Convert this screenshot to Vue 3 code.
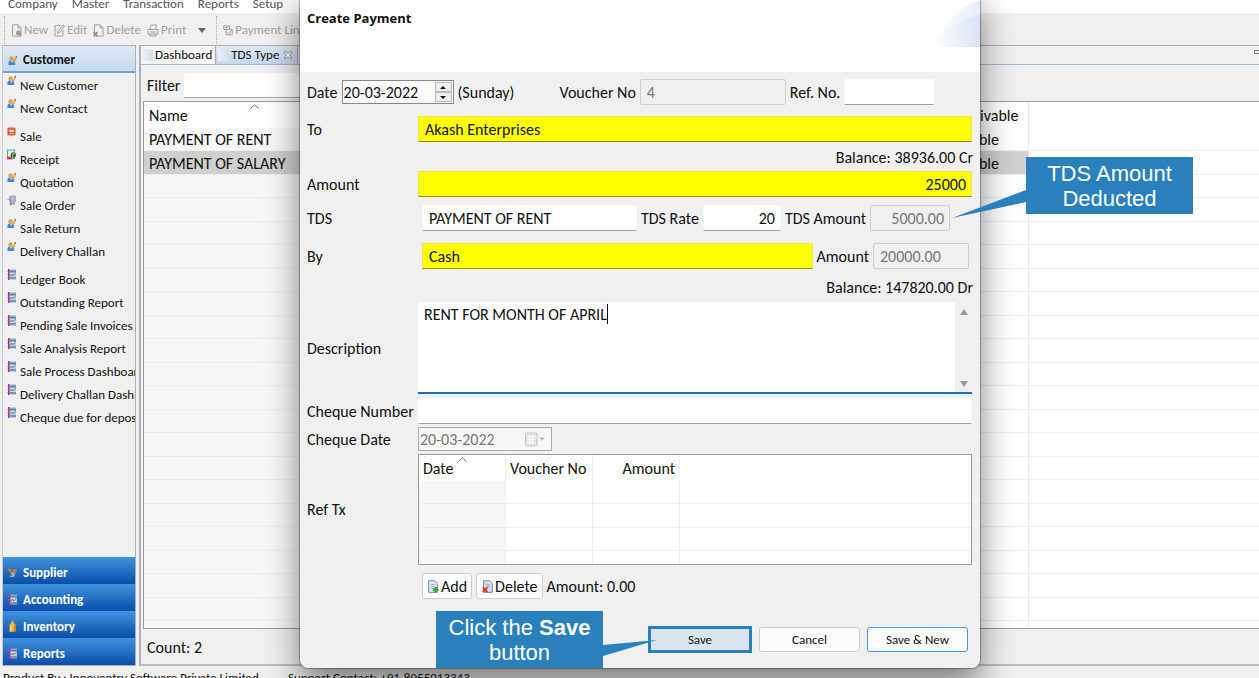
<script setup>
import { ref } from 'vue'

const menus = ['Company', 'Master', 'Transaction', 'Reports', 'Setup']
const groups = [
  [
    { label: 'New Customer', icon: 'person' },
    { label: 'New Contact', icon: 'person' },
  ],
  [
    { label: 'Sale', icon: 'sale' },
    { label: 'Receipt', icon: 'receipt' },
    { label: 'Quotation', icon: 'person' },
    { label: 'Sale Order', icon: 'order' },
    { label: 'Sale Return', icon: 'person' },
    { label: 'Delivery Challan', icon: 'person' },
  ],
  [
    { label: 'Ledger Book', icon: 'book' },
    { label: 'Outstanding Report', icon: 'book' },
    { label: 'Pending Sale Invoices', icon: 'book' },
    { label: 'Sale Analysis Report', icon: 'book' },
    { label: 'Sale Process Dashboard', icon: 'book' },
    { label: 'Delivery Challan Dashboard', icon: 'book' },
    { label: 'Cheque due for deposit', icon: 'book' },
  ],
]
const drawers = [
  { label: 'Supplier', icon: 'supplier' },
  { label: 'Accounting', icon: 'book' },
  { label: 'Inventory', icon: 'bottle' },
  { label: 'Reports', icon: 'book' },
]
const rows = [
  ['PAYMENT OF RENT', 'Payable'],
  ['PAYMENT OF SALARY', 'Payable'],
  ...Array.from({ length: 20 }, () => ['', '']),
]

const filter = ref('')
const date = ref('20-03-2022')
const voucherNo = ref('4')
const refNo = ref('')
const to = ref('Akash Enterprises')
const amount = ref('25000')
const tds = ref('PAYMENT OF RENT')
const tdsRate = ref('20')
const tdsAmount = ref('5000.00')
const by = ref('Cash')
const byAmount = ref('20000.00')
const description = ref('RENT FOR MONTH OF APRIL')
const chequeNo = ref('')
const chequeDate = ref('20-03-2022')
</script>

<template>
  <div class="app">
    <svg class="sprite" aria-hidden="true">
      <symbol id="person" viewBox="0 0 10 10">
        <path d="M0.5 10V7.4Q0.6 5 3 4.8H6Q8 5 8 7V10Z" fill="#3f86dc" />
        <path d="M3 5L4.5 7.5L6 5Z" fill="#e8f0fa" />
        <circle cx="4" cy="2.8" r="2.6" fill="#e8a13c" />
        <path d="M9.3 0.8L6.3 7.4" stroke="#d09a48" stroke-width="1.5" />
        <path d="M9.6 0L9 1.6" stroke="#c04848" stroke-width="1.5" />
      </symbol>
      <symbol id="sale" viewBox="0 0 10 10">
        <rect x="0.5" y="0.5" width="9" height="9" rx="1.4" fill="#ec5a2c" />
        <path d="M2.4 3H7.6L7.2 5.6H3Z" fill="#fff" />
        <circle cx="3.7" cy="7.3" r="0.7" fill="#fff" /><circle cx="6.5" cy="7.3" r="0.7" fill="#fff" />
      </symbol>
      <symbol id="receipt" viewBox="0 0 10 11">
        <rect x="0.5" y="0.5" width="8" height="9.5" fill="#dff1fa" stroke="#5593b5" />
        <path d="M0 8H5.5V11H0Z" fill="#d23b2e" />
        <circle cx="7" cy="6" r="3" fill="#3d6b26" />
        <path d="M8.4 4.4Q5.8 4 6.4 5.7T6 7.6" fill="none" stroke="#f0d83c" />
      </symbol>
      <symbol id="order" viewBox="0 0 10 11">
        <path d="M3 1L9 0.4L9.6 6.4L3.8 7.8Z" fill="#b4bad8" stroke="#7c82a2" stroke-width="0.8" />
        <path d="M0.5 4.5L3 3.5L4 9L8.5 8.2" fill="none" stroke="#888" stroke-width="1" />
        <circle cx="4.2" cy="9.8" r="1" fill="#555" /><circle cx="7.8" cy="9" r="1" fill="#777" />
      </symbol>
      <symbol id="book" viewBox="0 0 9 11">
        <rect x="1" y="0.5" width="8" height="10" fill="#8ea9c9" />
        <path d="M2.5 2.5H9M2.5 9H9" stroke="#6482ab" stroke-width="1" />
        <rect x="2.6" y="4" width="6" height="3.8" fill="#d3e2dc" />
        <path d="M3 7L4.5 5.2L5.8 6.7L8.4 4.4" fill="none" stroke="#26473a" stroke-width="0.8" />
        <rect x="1" y="0" width="1.4" height="11" fill="#c0209a" />
        <path d="M0 2.5H1.4M0 5.5H1.4M0 8.5H1.4" stroke="#888" stroke-width="0.5" />
      </symbol>
      <symbol id="supplier" viewBox="0 0 10 10">
        <path d="M3 4L8.4 6L6.5 10H2Z" fill="#a8b0b6" />
        <circle cx="2" cy="2.4" r="2" fill="#c07a3c" />
        <path d="M4.6 2L9.6 0.6V4.5L6 5.4Z" fill="#b98045" />
        <path d="M1 4.5L4 8.5" stroke="#6d5a48" stroke-width="1.6" />
      </symbol>
      <symbol id="bottle" viewBox="0 0 9 11">
        <path d="M3.5 0H5.5V1.6L7.5 3.5V10.5L1.5 11V3.5L3.5 1.6Z" fill="#f5b52c" />
        <path d="M3 4V10" stroke="#ffe08a" stroke-width="1.2" />
        <path d="M6.8 4V10.5" stroke="#d98514" stroke-width="1.2" />
      </symbol>
      <symbol id="page" viewBox="0 0 12 13">
        <path d="M1.5 0.8H7L10 3.8V12.2H1.5Z" fill="none" stroke="currentColor" />
        <path d="M7 0.8V3.8H10" fill="none" stroke="currentColor" />
      </symbol>
    </svg>

    <nav class="menubar">
      <a v-for="m in menus" :key="m" href="#">{{ m }}</a>
    </nav>

    <div class="toolbar">
      <button type="button">
        <svg width="11" height="13" viewBox="0 0 11 13"><use href="#page" width="12" height="13" /><circle cx="7.6" cy="9" r="2.6" fill="#9a9a9a" /></svg>New
      </button>
      <button type="button">
        <svg width="11" height="13" viewBox="0 0 11 13"><path d="M6 1.5H1V12H9V6.5M3.5 9.5L4 7.5L9 1L10.5 2.2L5.5 8.8Z" fill="none" stroke="currentColor" /></svg>Edit
      </button>
      <button type="button">
        <svg width="11" height="13" viewBox="0 0 11 13"><use href="#page" width="12" height="13" /><path d="M0.5 8L4.5 12M4.5 8L0.5 12" stroke="#8a8a8a" stroke-width="1.6" /></svg>Delete
      </button>
      <button type="button">
        <svg width="12" height="13" viewBox="0 0 12 13"><path d="M3 5L4 1H9.5L8.5 5M1 5.5H11V10H1ZM3 10V12H9V10M3 8H9" fill="none" stroke="currentColor" /></svg>Print
      </button>
      <button type="button" class="arrow" aria-label="More print options"><i></i></button>
      <button type="button" class="last">
        <svg width="10" height="11" viewBox="0 0 10 11"><path d="M0.8 0.8H6.5V4.5H0.8ZM3 5V9.8H9.2V4.2H6.5M4.5 7.5L6 8.8L9 4.5M2 2.6H5" fill="none" stroke="currentColor" /></svg>Payment Link
      </button>
    </div>

    <div class="body">
      <aside class="sidebar">
        <button type="button" class="side-head"><svg class="ico"><use href="#person" /></svg>Customer</button>
        <div class="side-list">
          <ul v-for="(g, i) in groups" :key="i">
            <li v-for="it in g" :key="it.label">
              <a href="#"><svg class="ico"><use :href="'#' + it.icon" /></svg>{{ it.label }}</a>
            </li>
          </ul>
        </div>
        <button v-for="d in drawers" :key="d.label" type="button" class="drawer">
          <svg class="ico"><use :href="'#' + d.icon" /></svg>{{ d.label }}
        </button>
      </aside>

      <main class="editor">
        <div class="tabs">
          <button type="button" class="tab"><span class="tab-ico"></span>Dashboard</button>
          <button type="button" class="tab active">
            <span class="tab-ico"></span>TDS Type
            <svg width="8" height="8" viewBox="0 0 8 8"><path d="M0.7 0.7H2.4L4 2.4L5.6 0.7H7.3V2.2L5.6 4L7.3 5.8V7.3H5.6L4 5.6L2.4 7.3H0.7V5.8L2.4 4L0.7 2.2Z" fill="#fff" stroke="#777" stroke-width="0.8" /></svg>
          </button>
          <span class="minimise"></span>
        </div>
        <div class="filter">
          <label for="filter">Filter</label>
          <input id="filter" v-model="filter" type="text" />
        </div>
        <div class="list">
          <table>
            <colgroup><col class="c-name" /><col class="c-mid" /><col class="c-type" /><col /></colgroup>
            <thead>
              <tr>
                <th>Name<svg class="sort" width="9" height="5" viewBox="0 0 9 5"><path d="M0.5 4.5L4.5 0.8L8.5 4.5" fill="none" stroke="#666" /></svg></th>
                <th></th><th>Receivable</th><th></th>
              </tr>
            </thead>
            <tbody>
              <tr v-for="(r, i) in rows" :key="i" :class="{ selected: i === 1 }">
                <td>{{ r[0] }}</td><td></td><td>{{ r[1] }}</td><td></td>
              </tr>
            </tbody>
          </table>
        </div>
        <p class="count">Count: 2</p>
      </main>
    </div>

    <footer class="status">
      <span>Product By : Innoventry Software Private Limited</span>
      <span>Support Contact: +91-8055013343</span>
    </footer>

    <section class="dialog" role="dialog" aria-labelledby="dlg-title">
      <header>
        <h1 id="dlg-title">Create Payment</h1>
        <svg class="swoosh" width="50" height="48" viewBox="0 0 50 48">
          <defs>
            <linearGradient id="sw1" x1="0" x2="1"><stop offset="0" stop-color="#fff" /><stop offset="1" stop-color="#e6edfa" /></linearGradient>
            <linearGradient id="sw2" x1="0" x2="1"><stop offset="0" stop-color="#fff" /><stop offset="1" stop-color="#d9e2f7" /></linearGradient>
          </defs>
          <path d="M2 47Q20 10 50 0V47Z" fill="url(#sw1)" />
          <path d="M2 47Q22 20 50 15V47Z" fill="url(#sw2)" />
        </svg>
      </header>

      <form @submit.prevent>
        <div class="row first">
          <label for="date">Date</label>
          <span class="spin">
            <input id="date" v-model="date" type="text" />
            <span class="spin-btns">
              <button type="button" aria-label="Increase"><i class="up"></i></button>
              <button type="button" aria-label="Decrease"><i class="down"></i></button>
            </span>
          </span>
          <span class="day">(Sunday)</span>
          <label for="vno">Voucher No</label>
          <input id="vno" v-model="voucherNo" class="field vno" type="text" disabled />
          <label for="rno">Ref. No.</label>
          <input id="rno" v-model="refNo" class="field rno" type="text" />
        </div>

        <div class="row gap-l">
          <label class="lead" for="to">To</label>
          <input id="to" v-model="to" class="field must grow" type="text" />
        </div>
        <p class="balance">Balance: 38936.00 Cr</p>
        <div class="row">
          <label class="lead" for="amount">Amount</label>
          <input id="amount" v-model="amount" class="field must grow num" type="text" />
        </div>

        <div class="row gap-m split">
          <label class="lead" for="tds">TDS</label>
          <input id="tds" v-model="tds" class="field grow" type="text" />
          <label for="rate">TDS Rate</label>
          <input id="rate" v-model="tdsRate" class="field rate num" type="text" />
          <label for="tdsamt">TDS Amount</label>
          <input id="tdsamt" v-model="tdsAmount" class="field tdsamt num" type="text" disabled />
        </div>

        <div class="row gap-xl split">
          <label class="lead" for="by">By</label>
          <input id="by" v-model="by" class="field must grow" type="text" />
          <label for="byamt">Amount</label>
          <input id="byamt" v-model="byAmount" class="field byamt" type="text" disabled />
        </div>
        <p class="balance tall">Balance: 147820.00 Dr</p>

        <div class="row">
          <label class="lead" for="desc">Description</label>
          <div class="area-box">
            <textarea id="desc" v-model="description"></textarea>
            <span class="caret"></span>
            <span class="scroll"><i class="up"></i><i class="down"></i></span>
          </div>
        </div>

        <div class="row gap-s">
          <label class="lead" for="cno">Cheque Number</label>
          <input id="cno" v-model="chequeNo" class="field grow" type="text" />
        </div>
        <div class="row gap-xs">
          <label class="lead" for="cdate">Cheque Date</label>
          <span class="datebox">
            <input id="cdate" v-model="chequeDate" type="text" disabled />
            <svg width="20" height="15" viewBox="0 0 20 15">
              <rect x="0.5" y="1" width="11.5" height="13" rx="1.5" fill="#e4e4e8" stroke="#c2c2c8" />
              <path d="M2.5 4.5H10M2.5 7.5H10M2.5 10.5H10M4.5 3V12M7.5 3V12" stroke="#fff" />
              <path d="M14 5.5H20L17 8.8Z" fill="#bbb" />
            </svg>
          </span>
        </div>

        <div class="row gap-xs">
          <span class="lead">Ref Tx</span>
          <div class="ref">
            <table>
              <colgroup><col class="r1" /><col class="r1" /><col class="r1" /><col /></colgroup>
              <thead>
                <tr>
                  <th>Date<svg class="sort" width="9" height="5" viewBox="0 0 9 5"><path d="M0.5 4.5L4.5 0.8L8.5 4.5" fill="none" stroke="#666" /></svg></th>
                  <th>Voucher No</th><th class="num">Amount</th><th></th>
                </tr>
              </thead>
              <tbody>
                <tr v-for="n in 4" :key="n"><td></td><td></td><td></td><td></td></tr>
              </tbody>
            </table>
          </div>
        </div>

        <div class="row tools">
          <button type="button">
            <svg width="11" height="13" viewBox="0 0 11 13"><path d="M0.7 0.7H6.5L9.3 3.5V12.3H0.7Z" fill="#e6edf5" stroke="#76859a" /><path d="M2.5 4.5H7M2.5 6.5H7M2.5 8.5H6" stroke="#9fb2ca" /><path d="M7.7 7V12.4M5 9.7H10.4" stroke="#35a82c" stroke-width="2.6" /></svg>Add
          </button>
          <button type="button">
            <svg width="11" height="13" viewBox="0 0 11 13"><path d="M1.7 0.7H7.5L10.3 3.5V12.3H1.7Z" fill="#d5e1f0" stroke="#76859a" /><path d="M3.5 4.5H8M3.5 6.5H8" stroke="#9fb2ca" /><path d="M0.8 7.4L5.4 12M5.4 7.4L0.8 12" stroke="#d8321c" stroke-width="1.8" /></svg>Delete
          </button>
          <span>Amount: 0.00</span>
        </div>

        <div class="actions">
          <button type="submit" class="save">Save</button>
          <button type="button">Cancel</button>
          <button type="button" class="blue">Save &amp; New</button>
        </div>
      </form>
    </section>

    <div class="callout tip-deducted">
      TDS Amount<br />Deducted
      <svg width="74" height="30" viewBox="0 0 74 30"><path d="M74 1V13L0 29Z" fill="#2a80bd" /></svg>
    </div>
    <div class="callout tip-save">
      Click the <b>Save</b><br />button
      <svg width="54" height="18" viewBox="0 0 54 18"><path d="M0 6V17L54 1Z" fill="#2a80bd" /></svg>
    </div>
  </div>
</template>

<style>
html,
body {
  margin: 0;
  overflow: hidden;
}
</style>

<style scoped>
.app {
  position: relative;
  display: flex;
  flex-direction: column;
  height: 100vh;
  overflow: hidden;
  background: #f0f0f0;
  color: #111;
  font-family: Calibri, Carlito, Lato, sans-serif;
  font-size: 16px;
}
.app * {
  box-sizing: border-box;
}
.sprite {
  position: absolute;
  width: 0;
  height: 0;
}
button,
input,
textarea {
  margin: 0;
  padding: 0;
  border: 0;
  border-radius: 0;
  background: none;
  color: inherit;
  font: inherit;
  outline: none;
}
a {
  color: inherit;
  text-decoration: none;
}
p,
h1,
ul {
  margin: 0;
  padding: 0;
  list-style: none;
}
i {
  display: block;
  width: 0;
  height: 0;
  border: 4px solid transparent;
}
i.up {
  border-top-width: 0;
  border-bottom-color: currentColor;
}
i.down {
  border-bottom-width: 0;
  border-top-color: currentColor;
}
.menubar,
.toolbar,
.sidebar,
.tab,
.status,
.actions {
  font-size: 13px;
  line-height: 18px;
}

.menubar {
  flex: none;
  display: flex;
  align-items: flex-end;
  gap: 14px;
  height: 13px;
  padding-left: 8px;
  background: #fff;
  color: #555;
}

.toolbar {
  flex: none;
  display: flex;
  align-items: center;
  height: 32px;
  padding: 2px 0 0 4px;
  color: #a0a0a0;
}
.toolbar button {
  display: flex;
  align-items: center;
  gap: 2px;
  height: 28px;
  padding-left: 6px;
}
.toolbar button:first-child,
.toolbar .last {
  border-left: 1px dotted #aaa;
}
.toolbar .arrow {
  padding: 0 10px 0 12px;
  color: #666;
}
.arrow i {
  border-top-color: currentColor;
  border-top-width: 5px;
  border-bottom-width: 0;
}

.body {
  flex: 1;
  display: flex;
  gap: 3px;
  min-height: 0;
  padding-left: 2px;
}
.sidebar {
  flex: none;
  display: flex;
  flex-direction: column;
  width: 134px;
  border: 1px solid #b0b0b0;
  border-left-color: #c8c8c8;
}
.side-head {
  display: flex;
  align-items: center;
  gap: 6px;
  height: 27px;
  padding: 3px 0 0 5px;
  border-bottom: 2px solid #6fa0d8;
  background: linear-gradient(#dfe9f5, #c5d9f1);
  font-weight: 700;
}
.ico {
  flex: none;
  width: 9px;
  height: 11px;
}
.side-list {
  flex: 1;
  min-height: 0;
  padding-top: 2px;
  overflow: hidden;
}
.side-list ul {
  margin-bottom: 5px;
}
.side-list a {
  display: flex;
  gap: 4px;
  height: 23px;
  padding-left: 4px;
  line-height: 21px;
  white-space: nowrap;
}
.drawer {
  display: flex;
  align-items: center;
  gap: 6px;
  height: 27px;
  padding: 3px 0 0 5px;
  border-top: 1px solid #3c93e6;
  background: linear-gradient(#3f90db, #0a4da8);
  color: #fff;
  font-weight: 700;
}

.editor {
  flex: 1;
  display: flex;
  flex-direction: column;
  min-width: 0;
  border: 1px solid #a9b0b8;
  border-left-width: 2px;
  border-right: 0;
  border-bottom: 2px solid #b4bcc8;
}
.tabs {
  flex: none;
  display: flex;
  height: 19px;
  border-bottom: 1px solid #a8b8cc;
}
.tab {
  display: flex;
  align-items: center;
  gap: 2px;
  padding: 0 3px 0 1px;
  border-right: 1px solid #aaa;
  background: #f6f6f6;
}
.tab.active {
  padding: 0 5px 0 2px;
  background: linear-gradient(#dde9f6, #c6d8ec);
}
.tab.active svg {
  margin-left: 3px;
}
.tab-ico {
  width: 11px;
  height: 12px;
  background: linear-gradient(90deg, #eef2f5, #cfe0ee);
}
.minimise {
  width: 8px;
  height: 4px;
  margin: 4px -3px 0 auto;
  border: 1px solid #777;
}
.filter {
  flex: none;
  display: flex;
  align-items: center;
  gap: 4px;
  height: 36px;
  padding: 4px 4px 0 6px;
}
.filter input {
  flex: 1;
  max-width: 400px;
  height: 25px;
  border-bottom: 1px solid #aaa;
  background: #fff;
}
.list {
  flex: 1;
  min-height: 0;
  margin-left: 2px;
  overflow: hidden;
  border: 1px solid #999;
  border-right: 0;
  background: #fff;
}
table {
  width: 100%;
  table-layout: fixed;
  border-collapse: separate;
  border-spacing: 0;
}
th,
td {
  padding: 2px 4px 0;
  font-weight: 400;
  line-height: 20px;
  text-align: left;
  white-space: nowrap;
}
th {
  position: relative;
}
.sort {
  position: absolute;
  top: 2px;
  left: calc(50% - 4px);
}
.c-name {
  width: 219px;
}
.c-mid {
  width: 581px;
}
.c-type {
  width: 85px;
}
.list th,
.list td {
  padding-left: 5px;
}
.list th {
  height: 26px;
}
.list td {
  height: 23px;
  border-bottom: 1px solid #eee;
}
.list tr:nth-child(even) td {
  height: 24px;
}
.list td:first-child {
  background: #f7f7f7;
}
.list td:nth-child(3),
.list th:nth-child(3) {
  border-right: 1px solid #e0ebf7;
}
.list .selected td:not(:last-child) {
  background: #d0d0d0;
}
.count {
  flex: none;
  height: 35px;
  padding-left: 6px;
  line-height: 38px;
}

.status {
  flex: none;
  display: flex;
  gap: 29px;
  height: 12px;
  padding-left: 3px;
  overflow: hidden;
  line-height: 24px;
  white-space: nowrap;
}

.dialog {
  position: absolute;
  top: -10px;
  left: 300px;
  width: 680px;
  overflow: hidden;
  border-radius: 8px;
  background: #f0f0f0;
  box-shadow: 0 0 1px 1px rgba(0, 0, 0, 0.3), 0 16px 34px rgba(0, 0, 0, 0.5);
}
.dialog header {
  position: relative;
  height: 82px;
  padding: 19px 7px;
  background: #fff;
}
.dialog h1 {
  font: 700 13px/18px "Open Sans", sans-serif;
}
.swoosh {
  position: absolute;
  top: 10px;
  right: 0;
}
form {
  padding: 7px 8px 15px 7px;
}
.row {
  display: flex;
  align-items: center;
  gap: 5px;
}
.row.split {
  gap: 4px;
}
.gap-xs {
  margin-top: 3px;
}
.gap-s {
  margin-top: 4px;
}
.gap-m {
  margin-top: 8px;
}
.gap-l {
  margin-top: 11px;
}
.gap-xl {
  margin-top: 12px;
}
.row label,
.row > span {
  flex: none;
  white-space: nowrap;
}
.row .lead {
  width: 106px;
}
.row.split .lead {
  width: 111px;
}
.row.first {
  gap: 4px;
}
.row .day {
  width: 98px;
}
.field {
  min-width: 0;
  height: 26px;
  padding: 0 5px 0 6px;
  border: 1px solid #fafafa;
  border-bottom: 1px solid #a0a0a0;
  background: #fff;
}
.field:disabled {
  border: 1px solid #cfcfcf;
  border-radius: 2px;
  background: #f0f0f0;
  color: #777;
}
.must {
  border-color: #e6e650 #e6e650 #8f8f20;
  background: #ff0;
}
.grow {
  flex: 1;
}
.num {
  text-align: right;
}
.vno {
  width: 146px;
}
.rno {
  width: 90px;
}
.rate {
  width: 78px;
}
.tdsamt {
  width: 80px;
  margin-right: 22px;
}
.byamt {
  width: 96px;
  margin-right: 3px;
}
.spin {
  display: flex;
  width: 112px;
  height: 24px;
  padding: 1px;
  border: 1px solid #888;
  background: #fbfbfb;
}
.spin input {
  flex: 1;
  min-width: 0;
}
.spin-btns {
  display: flex;
  flex-direction: column;
  width: 17px;
}
.spin-btns button {
  flex: 1;
  display: flex;
  align-items: center;
  justify-content: center;
  border: 1px solid #bbb;
  background: #eee;
}
.spin-btns i {
  border-left-width: 3px;
  border-right-width: 3px;
}
.spin-btns .up {
  border-bottom-width: 3px;
}
.spin-btns .down {
  border-top-width: 3px;
}
.balance {
  height: 29px;
  margin-right: -1px;
  line-height: 32px;
  text-align: right;
}
.balance.tall {
  height: 33px;
  line-height: 38px;
}
.area-box {
  position: relative;
  flex: 1;
  display: flex;
  height: 92px;
  border-bottom: 2px solid #1a6fb8;
  background: #fff;
}
textarea {
  flex: 1;
  padding: 3px 6px;
  line-height: 20px;
  overflow: hidden;
  resize: none;
}
.caret {
  position: absolute;
  top: 2px;
  left: 189px;
  width: 1px;
  height: 20px;
  background: #111;
}
.scroll {
  display: flex;
  flex-direction: column;
  justify-content: space-between;
  align-items: center;
  width: 17px;
  padding: 7px 0 5px;
  background: #f0f0f0;
  color: #999;
}
.scroll .up {
  border-bottom-width: 6px;
}
.scroll .down {
  border-top-width: 6px;
}
.datebox {
  display: flex;
  align-items: center;
  width: 134px;
  height: 24px;
  padding: 0 6px 0 1px;
  border: 1px solid #aaa;
  background: #f7f7f7;
}
.datebox input {
  flex: 1;
  min-width: 0;
  color: #777;
}
.ref {
  flex: 1;
  height: 111px;
  overflow: hidden;
  border: 1px solid #999;
  background: #fff;
}
.r1 {
  width: 87px;
}
.ref th {
  height: 26px;
  border-right: 1px solid #eee;
}
.ref td {
  height: 23px;
  border-right: 1px solid #e6eefa;
  border-bottom: 1px solid #eee;
}
.ref tr:nth-child(even) td {
  height: 24px;
}
.ref th:last-child,
.ref td:last-child {
  border-right: 0;
}
.ref td:first-child {
  background: #f7f7f7;
}
.ref th.num {
  text-align: right;
}
.tools {
  gap: 4px;
  margin-top: 8px;
  padding-left: 115px;
}
.tools button {
  display: flex;
  align-items: center;
  gap: 2px;
  height: 26px;
  padding: 0 4px 0 5px;
  border: 1px solid #ccc;
  border-radius: 3px;
  background: #fcfcfc;
}
.actions {
  display: flex;
  justify-content: flex-end;
  align-items: center;
  gap: 7px;
  margin-top: 27px;
  padding-right: 4px;
}
.actions button {
  width: 101px;
  height: 25px;
  border: 1px solid #ccc;
  border-radius: 3px;
  background: #fcfcfc;
}
.actions .blue {
  border-color: #4a98dc;
}
.actions .save {
  width: 104px;
  height: 27px;
  border: 3px solid #2a80bd;
  border-radius: 0;
  background: #d9e6f1;
}

.callout {
  position: absolute;
  width: 167px;
  height: 57px;
  padding-top: 4px;
  background: #2a80bd;
  color: #fff;
  font: 22px/25px "Liberation Sans", Arial, sans-serif;
  text-align: center;
  white-space: nowrap;
}
.callout svg {
  position: absolute;
}
.tip-deducted {
  top: 157px;
  left: 1026px;
}
.tip-deducted svg {
  top: 32px;
  right: 167px;
}
.tip-save {
  top: 611px;
  left: 436px;
}
.tip-save svg {
  top: 28px;
  left: 167px;
}
</style>
